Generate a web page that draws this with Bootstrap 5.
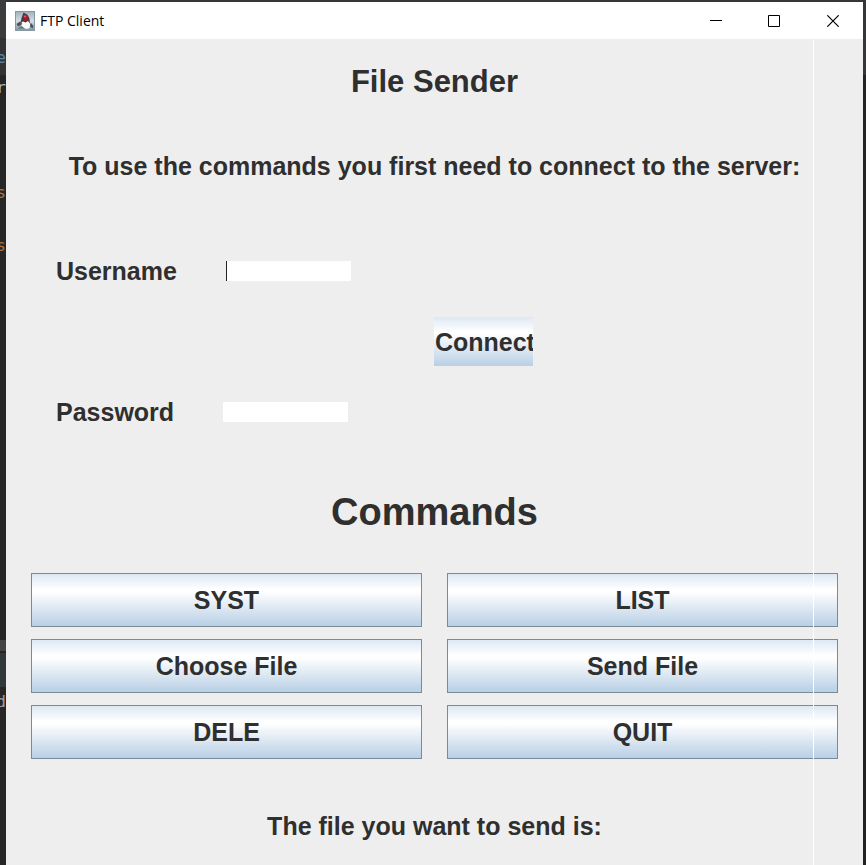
<!DOCTYPE html>
<html lang="en">
<head>
<meta charset="utf-8">
<meta name="viewport" content="width=device-width, initial-scale=1">
<title>FTP Client</title>
<link href="https://cdn.jsdelivr.net/npm/bootstrap@5.3.0/dist/css/bootstrap.min.css" rel="stylesheet">
<style>
  body { background: #262626; font-family: "Liberation Sans", Arial, sans-serif; color: #2f2f2f; }
  .desktop { padding-top: 2px; background: linear-gradient(#343637 0 75px, #242424 75px 280px, #222 280px); }
  .editor-edge {
    width: 6px; margin-top: -2px; font: 16px/20px "DejaVu Sans Mono", monospace;
    background: linear-gradient(#3a3c3d 0 38px, #313335 38px 75px, #262626 75px 640px, #444 640px 651px, #262626 651px 653px, #31383c 653px 687px, #262626 687px);
  }
  .editor-edge span { position: absolute; right: 0; }
  .glyph-1 { top: 48px; color: #5f87a8; }
  .glyph-2 { top: 78px; color: #a9b7c6; }
  .glyph-3 { top: 183px; color: #b0713c; }
  .glyph-4 { top: 236px; color: #b0713c; }
  .glyph-5 { top: 692px; color: #a0a0a0; }
  .app-window { background: #eee; margin-right: 3px; }
  .title-bar { height: 37px; background: #fff; color: #000; padding-left: 9px; }
  .title-text { font: 14px/20px "Open Sans", "Noto Sans", sans-serif; margin-left: 5px; }
  .win-btn { width: 58px; height: 37px; }
  .close-btn { width: 60px; }
  .pane { padding: 25px 25px 0; }
  .split-line { position: absolute; top: 38px; bottom: 0; right: 49px; width: 1px; background: #fff; }
  .pane h1, .pane h2, .pane p, .pane label { font-weight: 700; line-height: 36px; margin: 0; }
  .pane h1 { font-size: 31px; }
  .pane h2 { font-size: 38px; line-height: 44px; margin-top: 60px; }
  .pane p, .pane label, .java-btn { font-size: 25px; }
  .pane .intro { margin-top: 48px; }
  .login { margin-top: 69px; padding-left: 25px; gap: 83px; }
  .fields { gap: 105px; }
  .field-row { gap: 49px; }
  .field-row input { width: 125px; height: 20px; border: 0; border-radius: 0; padding: 0; background: #fff; outline: 0; }
  .field-row .with-caret { border-left: 1px solid #222; }
  .java-btn {
    font-weight: 700; line-height: 36px; color: #2f2f2f; border: 1px solid #7a8a99; border-radius: 0; height: 54px; padding: 0;
    background: linear-gradient(#dde8f3, #fff 30%, #fff 34%, #b8cfe5);
  }
  .connect-btn { width: 99px; height: 49px; border: 0; overflow: hidden; text-align: left; padding-left: 1px; white-space: nowrap; }
  .command-grid { margin-top: 39px; display: grid; grid-template-columns: 1fr 1fr; gap: 12px 25px; }
  .pane .status { margin-top: 49px; }
</style>
<script src="https://cdn.jsdelivr.net/npm/bootstrap@5.3.0/dist/js/bootstrap.bundle.min.js"></script>
</head>
<body>
<div class="desktop d-flex min-vh-100">
  <div class="editor-edge position-relative overflow-hidden flex-shrink-0" aria-hidden="true">
    <span class="glyph-1">e</span><span class="glyph-2">r</span><span class="glyph-3">s</span><span class="glyph-4">s</span><span class="glyph-5">d</span>
  </div>
  <div class="app-window position-relative flex-grow-1">
    <header class="title-bar d-flex align-items-center">
      <svg width="20" height="20" viewBox="0 0 20 20" aria-hidden="true">
        <defs><linearGradient id="tile" x2="0" y2="1"><stop stop-color="#9fb0bc"/><stop offset=".5" stop-color="#d5dde2"/><stop offset="1" stop-color="#8295a3"/></linearGradient></defs>
        <rect x=".5" y=".5" width="19" height="19" fill="url(#tile)" stroke="#8797a4"/>
        <path d="M6.500 10 14 9l1.500 3-1 5-3 1-4-2-2-3z" fill="#f8faf9"/>
        <path d="M8.500 1.500 12 3.500l2.500 4 .500 5-2-2.500-2.500 1.500-2.500-1-2.500 1.500L6.500 7z" fill="#3c4047"/>
        <ellipse cx="10.800" cy="7" rx="2.800" ry="3.500" fill="#a01c2c"/>
        <ellipse cx="10" cy="5.500" rx="1.200" ry="1" fill="#d0606f"/>
        <path d="M1.500 13 5 10.500l2 1.500-.500 2-3.500 1.500zM15.500 11.500l3 3.500-1 2.500-2.500-2z" fill="#4b5556"/>
        <path d="M2.500 17.500 6.500 15l3 2.500z" fill="#5f7671"/>
      </svg>
      <span class="title-text">FTP Client</span>
      <button class="win-btn btn border-0 rounded-0 p-0 d-flex align-items-center justify-content-center ms-auto" type="button" aria-label="Minimize"><svg width="12" height="12" viewBox="0 0 12 12"><path d="M0 5.500h12" stroke="#000"/></svg></button>
      <button class="win-btn btn border-0 rounded-0 p-0 d-flex align-items-center justify-content-center" type="button" aria-label="Maximize"><svg width="12" height="12" viewBox="0 0 12 12"><path d="M.5.5h11v11H.5z" fill="none" stroke="#000"/></svg></button>
      <button class="win-btn close-btn btn border-0 rounded-0 p-0 d-flex align-items-center justify-content-center" type="button" aria-label="Close"><svg width="12" height="12" viewBox="0 0 12 12"><path d="m.3.3 11.400 11.400M11.700.3.3 11.700" stroke="#000" stroke-width="1.200"/></svg></button>
    </header>
    <main class="pane">
      <h1 class="text-center">File Sender</h1>
      <p class="intro text-center">To use the commands you first need to connect to the server:</p>
      <form class="login d-flex align-items-center">
        <div class="fields d-flex flex-column">
          <div class="field-row d-flex align-items-center">
            <label for="username">Username</label>
            <input class="with-caret" id="username" type="text">
          </div>
          <div class="field-row d-flex align-items-center">
            <label for="password">Password</label>
            <input id="password" type="password">
          </div>
        </div>
        <button class="java-btn connect-btn" type="button">Connect</button>
      </form>
      <h2 class="text-center">Commands</h2>
      <div class="command-grid">
        <button class="java-btn" type="button">SYST</button>
        <button class="java-btn" type="button">LIST</button>
        <button class="java-btn" type="button">Choose File</button>
        <button class="java-btn" type="button">Send File</button>
        <button class="java-btn" type="button">DELE</button>
        <button class="java-btn" type="button">QUIT</button>
      </div>
      <p class="status text-center">The file you want to send is:</p>
    </main>
    <div class="split-line"></div>
  </div>
</div>
</body>
</html>
